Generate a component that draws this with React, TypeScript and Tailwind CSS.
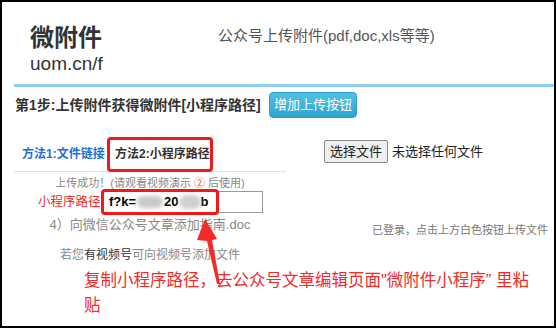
const font = "font-['Liberation_Sans','Noto_Sans_CJK_SC',sans-serif]";

function Arrow() {
  return (
    <svg className="absolute left-0 top-0 pointer-events-none" width="556" height="328" viewBox="0 0 556 328">
      <polygon
        points="203,217 215,237 210,238 218,282 215,282 205,239 195,238"
        fill="#f42a2a"
      />
    </svg>
  );
}

export default function App() {
  return (
    <div className={`relative w-[556px] h-[328px] overflow-hidden border-2 border-black bg-white text-[#333] whitespace-nowrap ${font}`}>
      {/* header */}
      <div className="flex h-[82px] pl-[28px]">
        <div className="pt-[22px] w-[188px]">
          <div className="text-[24px] leading-[28px] font-bold text-[#333]">微附件</div>
          <div className="text-[19px] leading-[20px] text-[#333] mt-[2px]">uom.cn/f</div>
        </div>
        <div className="pt-[25px] text-[15px] leading-[18px] text-[#555]">公众号上传附件(pdf,doc,xls等等)</div>
      </div>
      <div className="ml-[12px] h-[3px] bg-[#8ecdf4]" />

      {/* step row */}
      <div className="flex items-center mt-[5px] pl-[13px] h-[26px]">
        <div className="text-[14px] leading-[18px] font-bold text-[#333] w-[254px]">第1步:上传附件获得微附件[小程序路径]</div>
        <div className="h-[26px] w-[88px] flex items-center justify-center rounded-[4px] border border-[#2aa0c8] bg-gradient-to-b from-[#52c1e2] to-[#2da6d2] text-white text-[13px] leading-[16px]">
          增加上传按钮
        </div>
      </div>

      {/* columns */}
      <div className="flex">
        <div className="ml-[12px] w-[272px]">
          <div className="mt-[19px] h-[35px] border-b border-[#e3e3e3] flex items-center">
            <div className="pl-[8px] w-[93px] text-[12px] leading-[16px] font-bold text-[#1f6fd8]">方法1:文件链接</div>
            <div className="h-[35px] w-[106px] border-[3px] border-[#f01818] rounded-[4px] flex items-center pl-[5px] text-[12px] leading-[16px] font-bold text-[#333]">
              方法2:小程序路径
            </div>
          </div>
          <div className="mt-[4px] text-center text-[11px] leading-[15px] text-[#888]">
            上传成功！(请观看视频演示 <span className="text-[#f05a28]">②</span> 后使用)
          </div>
          <div className="flex items-center h-[22px] pl-[24px]">
            <div className="text-[12.5px] leading-[16px] text-[#f02828] w-[64px]">小程序路径</div>
            <div className="relative h-[22px] w-[161px] border border-[#999] flex items-center pl-[6px] text-[13px] font-bold text-black">
              <span>f?k=</span>
              <span className="inline-block w-[26px] h-[12px] rounded-full bg-[#c8c8c8] blur-[2px] mx-[1px]" />
              <span>20</span>
              <span className="inline-block w-[22px] h-[14px] rounded-full bg-[#cfcfcf] blur-[2px]" />
              <span>b</span>
              <div className="absolute left-[-2px] top-[-3px] w-[118px] h-[26px] border-[3px] border-[#f01818] rounded-[4px]" />
            </div>
          </div>
          <div className="mt-[3px] text-center text-[13px] leading-[18px] text-[#888]">4）向微信公众号文章添加指南.doc</div>
          <div className="mt-[13px] text-center text-[12px] leading-[16px] text-[#888]">
            若您<span className="text-[#333]">有视频号</span>可向视频号添加文件
          </div>
        </div>
        <div className="flex-1 pl-[38px] pr-[6px]">
          <div className="mt-[22px] flex items-center gap-[4px]">
            <div className="h-[23px] px-[5px] flex items-center border border-[#8a8a8a] rounded-[2px] bg-[#efefef] text-[13px] leading-[16px] text-[#222]">选择文件</div>
            <div className="text-[13px] leading-[16px] text-[#222]">未选择任何文件</div>
          </div>
          <div className="mt-[60px] text-right text-[11px] leading-[14px] text-[#777]">已登录，点击上方白色按钮上传文件</div>
        </div>
      </div>

      <div className="mt-[5px] pl-[82px] text-[16.5px] leading-[25px] text-[#f42a2a]">
        <div>复制小程序路径，去公众号文章编辑页面"微附件小程序” 里粘</div>
        <div>贴</div>
      </div>

      <Arrow />
    </div>
  );
}
